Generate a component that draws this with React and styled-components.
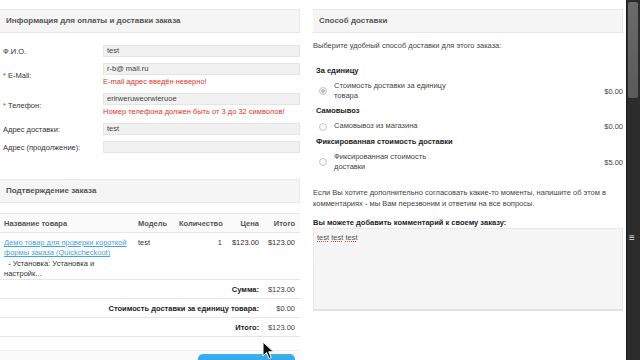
import React from 'react';
import styled, { createGlobalStyle } from 'styled-components';

const GlobalStyle = createGlobalStyle`
  html, body {
    margin: 0;
    padding: 0;
    background: #fff;
  }
  body {
    font-family: "Liberation Sans", Arial, sans-serif;
    font-size: 7.5px;
    color: #333;
  }
`;

const fields = [
  { label: 'Ф.И.О.', value: 'test' },
  { label: 'E-Mail:', value: 'r-b@ mail.ru', required: true, error: 'E-mail адрес введён неверно!' },
  { label: 'Телефон:', value: 'erirweruweorwieruoe', required: true, error: 'Номер телефона должен быть от 3 до 32 символов!' },
  { label: 'Адрес доставки:', value: 'test' },
  { label: 'Адрес (продолжение):', value: '' }
];

const shipping = [
  { title: 'За единицу', name: ['Стоимость доставки за единицу', 'товара'], price: '$0.00', checked: true },
  { title: 'Самовывоз', name: ['Самовывоз из магазина'], price: '$0.00' },
  { title: 'Фиксированная стоимость доставки', name: ['Фиксированная стоимость', 'доставки'], price: '$5.00' }
];

const totals = [
  { label: 'Сумма:', value: '$123.00' },
  { label: 'Стоимость доставки за единицу товара:', value: '$0.00' },
  { label: 'Итого:', value: '$123.00' }
];

function App() {
  return (
    <Page>
      <GlobalStyle />
      <Content>
        <LeftCol>
          <Heading>Информация для оплаты и доставки заказа</Heading>
          <Form>
            {fields.map(f => (
              <Field key={f.label}>
                <Label>
                  {f.required && <Star>* </Star>}
                  {f.label}
                </Label>
                <InputWrap>
                  <Input>{f.value}</Input>
                  {f.error && <Error>{f.error}</Error>}
                </InputWrap>
              </Field>
            ))}
          </Form>

          <Heading>Подтверждение заказа</Heading>
          <Table>
            <colgroup>
              <col style={{ width: 134 }} />
              <col style={{ width: 41 }} />
              <col style={{ width: 51 }} />
              <col style={{ width: 37 }} />
              <col style={{ width: 37 }} />
            </colgroup>
            <thead>
              <tr>
                <Th>Название товара</Th>
                <Th>Модель</Th>
                <Th>Количество</Th>
                <Th align="right">Цена</Th>
                <Th align="right" last>Итого</Th>
              </tr>
            </thead>
            <tbody>
              <tr>
                <Td>
                  <ProductLink>Демо товар для проверки короткой формы заказа (Quickcheckout)</ProductLink>
                  <Option>&nbsp; - Установка: Установка и настройк...</Option>
                </Td>
                <Td>test</Td>
                <Td align="right">1</Td>
                <Td align="right">$123.00</Td>
                <Td align="right" last>$123.00</Td>
              </tr>
              {totals.map(t => (
                <tr key={t.label}>
                  <TotalLabel colSpan={4}>{t.label}</TotalLabel>
                  <TotalValue>{t.value}</TotalValue>
                </tr>
              ))}
            </tbody>
          </Table>
          <ButtonBar>
            <ConfirmButton>Подтвердить заказ</ConfirmButton>
          </ButtonBar>
        </LeftCol>

        <RightCol>
          <Heading>Способ доставки</Heading>
          <Intro>Выберите удобный способ доставки для этого заказа:</Intro>
          <Methods>
            {shipping.map(s => (
              <div key={s.title}>
                <GroupTitle>{s.title}</GroupTitle>
                <MethodRow>
                  <Radio checked={s.checked} />
                  <MethodName>
                    {s.name.map(n => <div key={n}>{n}</div>)}
                  </MethodName>
                  <Price>{s.price}</Price>
                </MethodRow>
              </div>
            ))}
          </Methods>
          <Note>
            Если Вы хотите дополнительно согласовать какие-то моменты, напишите об этом в
            комментариях - мы Вам перезвоним и ответим на все вопросы.
          </Note>
          <CommentLabel>Вы можете добавить комментарий к своему заказу:</CommentLabel>
          <Comment>
            <Spell>test</Spell> <Spell>test</Spell> <Spell>test</Spell>
          </Comment>
        </RightCol>
      </Content>

      <Scrollbar>
        <Thumb />
        <Grip>≡</Grip>
      </Scrollbar>

      <Cursor width="13" height="19" viewBox="0 0 13 19">
        <path d="M1 1 L1 15 L4.5 11.5 L7 17.5 L9.2 16.6 L6.8 10.8 L11.5 10.8 Z" fill="#111" stroke="#fff" strokeWidth="1" />
      </Cursor>
    </Page>
  );
}

const Page = styled.div`
  position: relative;
  display: flex;
  width: 640px;
  height: 360px;
  overflow: hidden;
`;

const Content = styled.div`
  flex: 1;
  display: flex;
  gap: 13px;
  padding-top: 9px;
  padding-right: 3px;
`;

const LeftCol = styled.div`
  width: 300px;
  flex-shrink: 0;
`;

const RightCol = styled.div`
  flex: 1;
`;

const Heading = styled.div`
  height: 22px;
  line-height: 22px;
  padding-left: 6px;
  background: #f5f5f5;
  border: 1px solid #e8e8e8;
  border-left: none;
  font-size: 8px;
  font-weight: bold;
  color: #555;
`;

const Form = styled.div`
  padding: 12px 0 20px;
`;

const Field = styled.div`
  display: flex;
  align-items: center;
  margin-bottom: 6px;
`;

const Label = styled.div`
  width: 100px;
  flex-shrink: 0;
  padding-left: 3px;
  color: #333;
`;

const Star = styled.span`
  color: #e33;
`;

const InputWrap = styled.div`
  width: 198px;
`;

const Input = styled.div`
  height: 10px;
  line-height: 10px;
  padding-left: 3px;
  background: #f1f1f1;
  border: 1px solid #e4e4e4;
  box-sizing: content-box;
  color: #444;
`;

const Error = styled.div`
  color: #e0352b;
  line-height: 10px;
  margin-top: 2px;
`;

const Table = styled.table`
  width: 300px;
  table-layout: fixed;
  margin-top: 10px;
  border-collapse: collapse;
  border-top: 1px solid #e6e6e6;
`;

const Th = styled.th`
  text-align: ${p => p.align || 'left'};
  font-weight: bold;
  color: #555;
  padding: 0 ${p => (p.last ? '5px' : '4px')} 0 4px;
  height: 18px;
  background: #fafafa;
  border-bottom: 1px solid #e6e6e6;
  white-space: nowrap;
`;

const Td = styled.td`
  text-align: ${p => p.align || 'left'};
  vertical-align: top;
  padding: 5px ${p => (p.last ? '5px' : '4px')} 0 4px;
  line-height: 10.3px;
  height: 41px;
  border-bottom: 1px solid #e6e6e6;
  white-space: ${p => (p.align ? 'nowrap' : 'normal')};
`;

const ProductLink = styled.a`
  color: #45a3de;
  text-decoration: underline;
`;

const Option = styled.div`
  color: #333;
`;

const TotalLabel = styled.td`
  text-align: right;
  font-weight: bold;
  color: #222;
  padding: 0 4px;
  height: 18px;
  border-bottom: 1px solid #e6e6e6;
`;

const TotalValue = styled.td`
  text-align: right;
  padding: 0 5px 0 4px;
  border-bottom: 1px solid #e6e6e6;
  color: #444;
`;

const ButtonBar = styled.div`
  margin-top: 13px;
  height: 20px;
  padding: 3px 5px 0 0;
  border-top: 1px solid #eee;
  background: #fafafa;
  display: flex;
  justify-content: flex-end;
`;

const ConfirmButton = styled.div`
  width: 97px;
  height: 20px;
  padding-top: 10px;
  line-height: 20px;
  text-align: center;
  color: #fff;
  background: linear-gradient(#3cb0ee, #1f96dc);
  border-radius: 5px;
  font-weight: bold;
`;

const Intro = styled.div`
  margin-top: 8px;
  line-height: 10px;
  color: #444;
`;

const Methods = styled.div`
  margin-top: 15px;
  padding-left: 3px;
`;

const GroupTitle = styled.div`
  font-weight: bold;
  line-height: 10px;
  margin-top: 4px;
  color: #222;
`;

const MethodRow = styled.div`
  display: flex;
  align-items: center;
  min-height: 13px;
  margin-top: 4.5px;
  padding-left: 3px;
`;

const Radio = styled.span`
  width: 6px;
  height: 6px;
  border-radius: 50%;
  border: 1px solid #c8c8c8;
  background: ${p => (p.checked ? 'radial-gradient(circle, #bbb 0 1.5px, #f4f4f4 2px)' : '#fafafa')};
  margin-right: 7px;
  flex-shrink: 0;
`;

const MethodName = styled.div`
  flex: 1;
  line-height: 10.5px;
  color: #444;
`;

const Price = styled.div`
  color: #444;
`;

const Note = styled.div`
  margin-top: 14px;
  line-height: 11px;
  color: #444;
`;

const CommentLabel = styled.div`
  margin-top: 9px;
  font-weight: bold;
  color: #222;
  line-height: 10px;
`;

const Comment = styled.div`
  height: 72px;
  padding: 4px 3px;
  background: #f5f5f5;
  border: 1px solid #e8e8e8;
  border-bottom: 2px solid #e2e2e2;
  color: #555;
`;

const Spell = styled.span`
  text-decoration: underline dotted #d44;
`;

const Scrollbar = styled.div`
  position: relative;
  width: 13px;
  flex-shrink: 0;
  background: #2c2c2c;
  border-left: 1px solid #1a1a1a;
`;

const Thumb = styled.div`
  margin: 2px 2px 0 1px;
  height: 96px;
  background: linear-gradient(#6a6a6a, #5a5a5a);
  border-radius: 2px;
`;

const Grip = styled.div`
  position: absolute;
  top: 232px;
  left: 2px;
  color: #ddd;
  font-size: 10px;
`;

const Cursor = styled.svg`
  position: absolute;
  left: 262px;
  top: 341px;
`;

export default App;
